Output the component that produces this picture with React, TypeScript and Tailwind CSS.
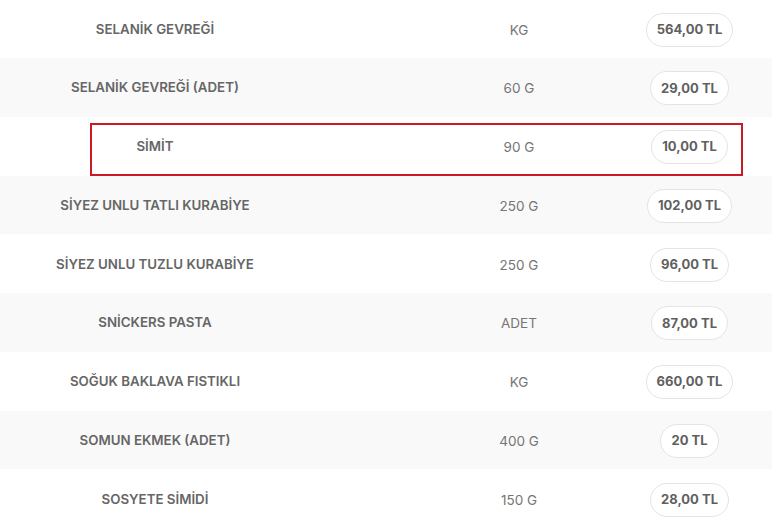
const rows = [
  { name: "SELANİK GEVREĞİ", unit: "KG", price: "564,00 TL" },
  { name: "SELANİK GEVREĞİ (ADET)", unit: "60 G", price: "29,00 TL" },
  { name: "SİMİT", unit: "90 G", price: "10,00 TL" },
  { name: "SİYEZ UNLU TATLI KURABİYE", unit: "250 G", price: "102,00 TL" },
  { name: "SİYEZ UNLU TUZLU KURABİYE", unit: "250 G", price: "96,00 TL" },
  { name: "SNİCKERS PASTA", unit: "ADET", price: "87,00 TL" },
  { name: "SOĞUK BAKLAVA FISTIKLI", unit: "KG", price: "660,00 TL" },
  { name: "SOMUN EKMEK (ADET)", unit: "400 G", price: "20 TL" },
  { name: "SOSYETE SİMİDİ", unit: "150 G", price: "28,00 TL" },
];

export default function App() {
  return (
    <div
      className="relative h-[526px] w-[772px] overflow-hidden bg-white"
      style={{ fontFamily: "Inter, 'Noto Sans', sans-serif" }}
    >
      <div className="mt-[-0.75px] flex flex-col">
        {rows.map((row, i) => (
          <div
            key={row.name}
            className={`grid h-[58.75px] grid-cols-[310px_295px_1fr] items-center pt-[2px] ${
              i % 2 === 1 ? "bg-[#f9f9f9]" : "bg-white"
            }`}
          >
            <div className="text-center text-[13.3px] font-semibold text-[#666666]">
              {row.name}
            </div>
            <div className="pl-[123px] text-center text-[13.5px] text-[#757575]">
              {row.unit}
            </div>
            <div className="flex justify-center pl-[2px]">
              <span className="flex h-[34px] items-center rounded-full border border-[#e4e4e4] bg-white px-[10px] text-[13px] font-bold text-[#5f5f5f]">
                {row.price}
              </span>
            </div>
          </div>
        ))}
      </div>

      {/* kırmızı işaret kutusu */}
      <div className="absolute left-[90px] top-[123px] h-[53px] w-[653px] border-2 border-[#cc1a24]" />
    </div>
  );
}
